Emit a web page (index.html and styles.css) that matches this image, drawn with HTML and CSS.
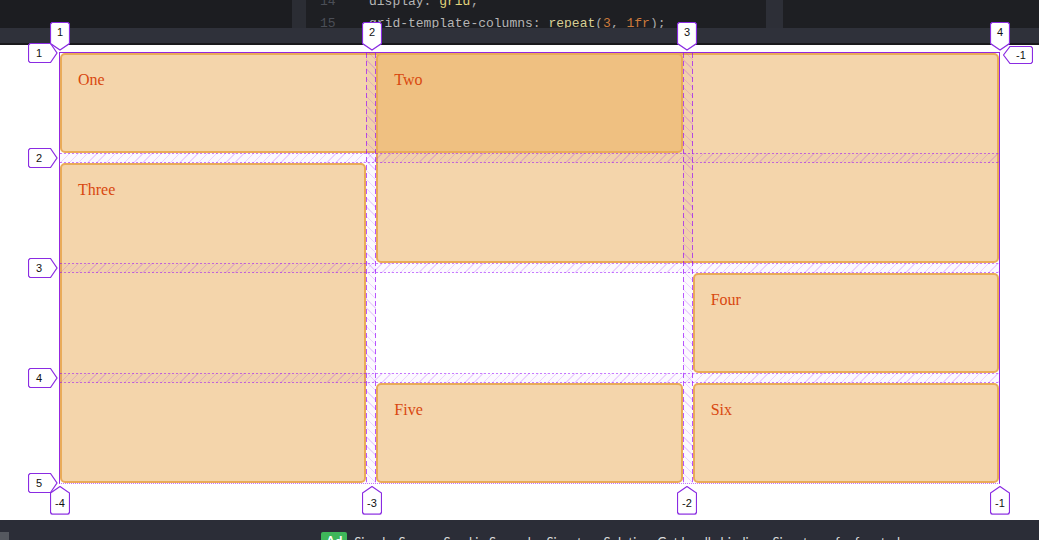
FILE: index.html
```html
<!DOCTYPE html>
<html>
<head>
<meta charset="utf-8">
<link rel="stylesheet" href="styles.css">
</head>
<body>
<div class="app">
  <div class="editor">
    <div class="pane-left"></div>
    <div class="gutter-strip"></div>
    <div class="code">
      <div class="line"><span class="ln">14</span><span class="prop">display</span><span class="punc">: </span><span class="kw">grid</span><span class="punc">;</span></div>
      <div class="line"><span class="ln">15</span><span class="prop">grid-template-columns</span><span class="punc">: </span><span class="fn">repeat</span><span class="punc">(</span><span class="num">3</span><span class="punc">, </span><span class="num">1fr</span><span class="punc">);</span></div>
    </div>
    <div class="scroll-strip"></div>
    <div class="pane-right"></div>
  </div>
  <div class="toolbar"></div>
  <div class="stage">
    <div class="grid-wrap">
      <div class="wrapper">
        <div class="item one">One</div>
        <div class="item two">Two</div>
        <div class="item three">Three</div>
        <div class="item four">Four</div>
        <div class="item five">Five</div>
        <div class="item six">Six</div>
      </div>
      <div class="overlay">
        <div class="vgap vg1"></div>
        <div class="vgap vg2"></div>
        <div class="hgap hg1"></div>
        <div class="hgap hg2"></div>
        <div class="hgap hg3"></div>
      </div>
    </div>
  </div>
  <div class="footer">
    <div class="fb-btn"></div>
    <div class="ad">
      <span class="ad-tag">Ad</span>
      <span class="ad-text">Simple, Secure, Send in Seconds eSignature Solution. Get legally binding eSignatures for free today.</span>
    </div>
  </div>

  <div class="badges">
    <div class="badge left r1"><svg width="30" height="20" viewBox="0 0 30 20"><polygon points="2,0.5 22.5,0.5 29,10 22.5,19.5 2,19.5 0.5,18 0.5,2"/></svg><span>1</span></div>
    <div class="badge left r2"><svg width="30" height="20" viewBox="0 0 30 20"><polygon points="2,0.5 22.5,0.5 29,10 22.5,19.5 2,19.5 0.5,18 0.5,2"/></svg><span>2</span></div>
    <div class="badge left r3"><svg width="30" height="20" viewBox="0 0 30 20"><polygon points="2,0.5 22.5,0.5 29,10 22.5,19.5 2,19.5 0.5,18 0.5,2"/></svg><span>3</span></div>
    <div class="badge left r4"><svg width="30" height="20" viewBox="0 0 30 20"><polygon points="2,0.5 22.5,0.5 29,10 22.5,19.5 2,19.5 0.5,18 0.5,2"/></svg><span>4</span></div>
    <div class="badge left r5"><svg width="30" height="20" viewBox="0 0 30 20"><polygon points="2,0.5 22.5,0.5 29,10 22.5,19.5 2,19.5 0.5,18 0.5,2"/></svg><span>5</span></div>

    <div class="badge right rr1"><svg width="30" height="18" viewBox="0 0 30 18"><polygon points="7,0.5 28,0.5 29.5,2 29.5,16 28,17.5 7,17.5 0.5,9"/></svg><span>-1</span></div>

    <div class="badge top c1"><svg width="20" height="29" viewBox="0 0 20 29"><polygon points="0.5,2 2,0.5 18,0.5 19.5,2 19.5,21.5 10,28 0.5,21.5"/></svg><span>1</span></div>
    <div class="badge top c2"><svg width="20" height="29" viewBox="0 0 20 29"><polygon points="0.5,2 2,0.5 18,0.5 19.5,2 19.5,21.5 10,28 0.5,21.5"/></svg><span>2</span></div>
    <div class="badge top c3"><svg width="20" height="29" viewBox="0 0 20 29"><polygon points="0.5,2 2,0.5 18,0.5 19.5,2 19.5,21.5 10,28 0.5,21.5"/></svg><span>3</span></div>
    <div class="badge top c4"><svg width="20" height="29" viewBox="0 0 20 29"><polygon points="0.5,2 2,0.5 18,0.5 19.5,2 19.5,21.5 10,28 0.5,21.5"/></svg><span>4</span></div>

    <div class="badge bottom c1"><svg width="20" height="29" viewBox="0 0 20 29"><polygon points="10,0.5 19.5,7 19.5,26.5 18,28 2,28 0.5,26.5 0.5,7"/></svg><span>-4</span></div>
    <div class="badge bottom c2"><svg width="20" height="29" viewBox="0 0 20 29"><polygon points="10,0.5 19.5,7 19.5,26.5 18,28 2,28 0.5,26.5 0.5,7"/></svg><span>-3</span></div>
    <div class="badge bottom c3"><svg width="20" height="29" viewBox="0 0 20 29"><polygon points="10,0.5 19.5,7 19.5,26.5 18,28 2,28 0.5,26.5 0.5,7"/></svg><span>-2</span></div>
    <div class="badge bottom c4"><svg width="20" height="29" viewBox="0 0 20 29"><polygon points="10,0.5 19.5,7 19.5,26.5 18,28 2,28 0.5,26.5 0.5,7"/></svg><span>-1</span></div>
  </div>
</div>
</body>
</html>
```

FILE: styles.css
```css
* { box-sizing: border-box; }
html, body { margin: 0; padding: 0; background: #fff; }
body { width: 1039px; height: 540px; overflow: hidden; font-family: "Liberation Serif", serif; }

.app { position: relative; width: 1039px; height: 540px; display: flex; flex-direction: column; }

/* editor strip */
.editor { height: 28px; display: flex; background: #1e1f23; overflow: hidden; flex: none; }
.pane-left { width: 292px; background: #1c1d21; }
.gutter-strip { width: 14px; background: #2b2d34; }
.code { width: 460px; font-family: "Liberation Mono", monospace; font-size: 13px; }
.line { height: 22px; line-height: 22px; display: flex; white-space: pre; }
.line:first-child { margin-top: -9px; }
.ln { width: 63px; padding-left: 14px; color: #4b4e57; }
.prop { color: #b5b5b5; }
.punc { color: #a9a9a9; }
.kw { color: #e2d47c; }
.fn { color: #d8cf94; }
.num { color: #cc7a3c; }
.scroll-strip { width: 17px; background: #2d2f37; }
.pane-right { flex: 1; background: #1e1f23; }

.toolbar { height: 17px; flex: none; background: #2f313a; border-bottom: 2px solid #19191c; }

/* content */
.stage { height: 475px; flex: none; background: #fff; padding: 8px 0 0 60px; }
.grid-wrap { position: relative; width: 939px; }
.wrapper {
  display: grid;
  grid-template-columns: repeat(3, 1fr);
  gap: 10px;
  grid-auto-rows: 100px;
}
.item {
  border: 2px solid rgb(233, 171, 88);
  border-radius: 5px;
  background-color: rgba(233, 171, 88, 0.5);
  padding: 1em;
  color: #d9480f;
  font-family: "Liberation Serif", serif;
  font-size: 16px;
}
.one { grid-column: 1 / 3; grid-row: 1; }
.two { grid-column: 2 / 4; grid-row: 1 / 3; }
.three { grid-column: 1; grid-row: 2 / 5; }
.four { grid-column: 3; grid-row: 3; }
.five { grid-column: 2; grid-row: 4; }
.six { grid-column: 3; grid-row: 4; }

/* grid inspector overlay */
.overlay {
  position: absolute;
  top: -1px; left: -1px; right: -1px; bottom: -1px;
  border-top: 1px solid #9326e0;
  border-left: 1px solid #9326e0;
  border-right: 1px solid #9326e0;
  border-bottom: 1px dotted rgba(148, 0, 255, 0.55);
  display: grid;
  grid-template-columns: 1fr 10px 1fr 10px 1fr;
  grid-template-rows: 100px 10px 100px 10px 100px 10px 100px;
  pointer-events: none;
}
.vgap {
  grid-row: 1 / -1;
  background:
    repeating-linear-gradient(to bottom, rgba(148, 0, 255, 0.65) 0 5px, transparent 5px 8px) left top / 1px 100% no-repeat,
    repeating-linear-gradient(to bottom, rgba(148, 0, 255, 0.65) 0 5px, transparent 5px 8px) right top / 1px 100% no-repeat,
    repeating-linear-gradient(45deg, rgba(148, 0, 255, 0.15) 0 1px, transparent 1px 6.5px),
    rgba(148, 0, 255, 0.025);
}
.vg1 { grid-column: 2; }
.vg2 { grid-column: 4; }
.hgap {
  grid-column: 1 / -1;
  background:
    repeating-linear-gradient(to right, rgba(148, 0, 255, 0.5) 0 2px, transparent 2px 4px) left top / 100% 1px no-repeat,
    repeating-linear-gradient(to right, rgba(148, 0, 255, 0.5) 0 2px, transparent 2px 4px) left bottom / 100% 1px no-repeat,
    repeating-linear-gradient(135deg, rgba(148, 0, 255, 0.15) 0 1px, transparent 1px 6.5px),
    rgba(148, 0, 255, 0.025);
}
.hg1 { grid-row: 2; }
.hg2 { grid-row: 4; }
.hg3 { grid-row: 6; }

/* footer */
.footer { height: 20px; flex: none; background: #2b2d37; display: flex; align-items: flex-start; overflow: hidden; }
.fb-btn { width: 9px; height: 10px; margin-top: 12px; background: #55585f; }
.ad { margin-left: 312px; margin-top: 12px; display: flex; align-items: flex-start; gap: 7px; font-family: Lato, "Liberation Sans", sans-serif; font-size: 13px; white-space: nowrap; }
.ad-tag { background: #3fb75a; color: #fff; font-weight: 700; padding: 0 5px; border-radius: 2px; line-height: 18px; }
.ad-text { color: #dcdcdc; line-height: 18px; margin-top: 1px; }

/* line number badges */
.badges { position: absolute; inset: 0; pointer-events: none; }
.badge { position: absolute; font-family: "Liberation Sans", Arial, sans-serif; font-size: 11px; color: #111; }
.badge svg { position: absolute; left: 0; top: 0; display: block; }
.badge polygon { fill: #fff; stroke: #8a2be2; stroke-width: 1.2; }
.badge span { position: absolute; text-align: center; }

.badge.left { width: 30px; height: 20px; left: 28px; }
.badge.left span { left: 0; top: 0; width: 22px; line-height: 20px; }
.r1 { top: 43px; }
.r2 { top: 148px; }
.r3 { top: 258px; }
.r4 { top: 368px; }
.r5 { top: 473px; }

.badge.right { width: 30px; height: 18px; left: 1003px; top: 46px; }
.badge.right span { left: 7px; top: 0; width: 22px; line-height: 18px; }

.badge.top { width: 20px; height: 29px; top: 22px; }
.badge.top span { left: 0; top: 0; width: 20px; line-height: 21px; }
.badge.bottom { width: 20px; height: 29px; top: 486px; }
.badge.bottom span { left: 0; top: 7px; width: 20px; line-height: 21px; }
.badge.bottom polygon { filter: drop-shadow(0 1px 0 rgba(160, 90, 230, 0.5)); }
.c1 { left: 50px; }
.c2 { left: 362px; }
.c3 { left: 677px; }
.c4 { left: 990px; }
```
